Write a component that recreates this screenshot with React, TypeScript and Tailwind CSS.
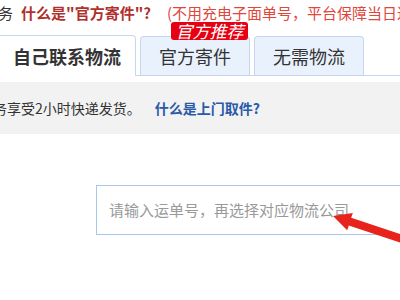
export default function App() {
  return (
    <div
      className="relative w-[400px] h-[300px] overflow-hidden bg-white text-[#333]"
      style={{ fontFamily: '"Noto Sans CJK SC", "Noto Sans", sans-serif' }}
    >
      {/* top notice */}
      <div className="flex items-center h-[26px] whitespace-nowrap text-[15px] -ml-[2px]">
        <span className="text-[#333]">务</span>
        <span className="ml-[8px] font-bold text-[#b0302c]">什么是"官方寄件"?</span>
        <span className="ml-[16px] text-[#e0463c]">(不用充电子面单号，平台保障当日达</span>
      </div>

      {/* tabs */}
      <div className="relative pt-[9px]">
        <div className="flex items-end h-[41px] border-b border-[#c6d6ec]">
          <div className="-ml-[2px] w-[138px] h-[41px] -mb-px bg-white border border-b-0 border-[#c6d6ec] rounded-tr-[4px] flex items-center justify-center text-[18px] font-bold text-[#333]">
            自己联系物流
          </div>
          <div className="relative ml-[4px] w-[110px] h-[39px] bg-[#e9f1fc] border border-b-0 border-[#c6d6ec] rounded-t-[4px] flex items-center justify-center text-[18px] text-[#333]">
            官方寄件
          </div>
          <div className="ml-[4px] w-[110px] h-[39px] bg-[#e9f1fc] border border-b-0 border-[#c6d6ec] rounded-t-[4px] flex items-center justify-center text-[18px] text-[#333]">
            无需物流
          </div>
        </div>
        <span className="absolute left-[171px] top-[-4px] w-[77px] h-[18px] bg-[#e60012] rounded-[3px] text-white italic text-[17px] leading-[17px] text-center whitespace-nowrap overflow-hidden">
          官方推荐
        </span>
      </div>

      {/* info bar */}
      <div className="mt-[6px] h-[52px] bg-[#f2f2f2] flex items-center whitespace-nowrap text-[14px]">
        <span className="-ml-[7px] text-[#333]">务享受2小时快递发货。</span>
        <span className="ml-[14px] font-bold text-[#2a5aa8]">什么是上门取件?</span>
      </div>

      {/* tracking input */}
      <div className="mt-[51px] ml-[96px] w-[320px] h-[50px] border border-[#a8c7ea] flex items-center pl-[12px] text-[15px] text-[#999] whitespace-nowrap">
        请输入运单号，再选择对应物流公司
      </div>

      {/* annotation arrow */}
      <svg className="absolute left-0 top-0" width="400" height="300" viewBox="0 0 400 300">
        <polygon
          points="333,216 352.8,213 351.2,217.8 411.2,237.7 408.8,245.3 348.8,225.4 347.2,230.2"
          fill="#e8231b"
        />
      </svg>
    </div>
  );
}
